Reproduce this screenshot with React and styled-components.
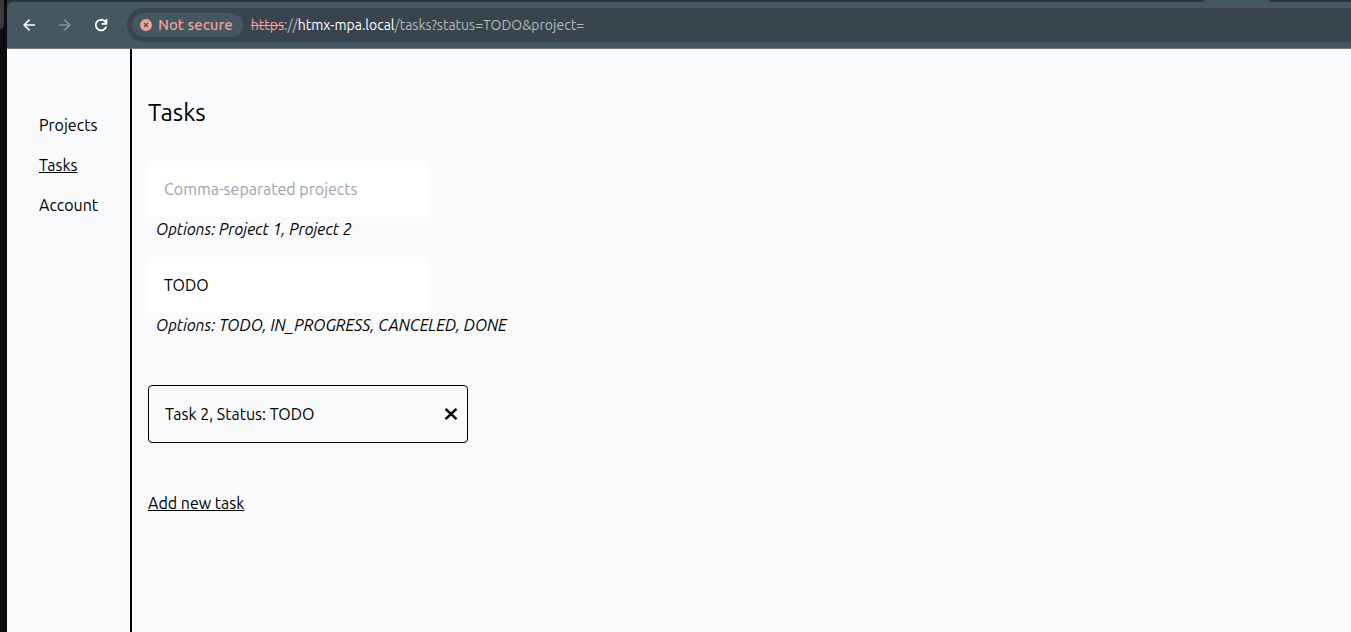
import React, { useState } from "react";
import styled, { createGlobalStyle } from "styled-components";

const GlobalStyle = createGlobalStyle`
  *, *::before, *::after { box-sizing: border-box; }
  body {
    margin: 0;
    background: #f9fafc;
    color: #000;
    font-family: Ubuntu, "Noto Sans", sans-serif;
    font-size: 16px;
    line-height: 24px;
  }
  button, input { font: inherit; color: inherit; }
`;

const Desktop = styled.div`
  display: flex;
  min-height: 100vh;
  background: #0d0d0d;
`;

const Edge = styled.div`
  flex: none;
  width: 7px;
`;

const EdgeWindow = styled.div`
  width: 4px;
  height: 29px;
  background: #3a3a3a;
  border-bottom-right-radius: 4px;
`;

const Browser = styled.div`
  flex: 1;
  min-width: 0;
  display: flex;
  flex-direction: column;
  background: #2a373d;
`;

const TabStrip = styled.div`
  display: flex;
  height: 2px;
  background: linear-gradient(90deg, #2a373d 50%, #455760 50%);
`;

const TabGap = styled.div`
  flex: ${(p) => (p.$width ? "none" : "1")};
  width: ${(p) => (p.$width ? p.$width : "auto")};
  background: #2a373d;
  border-radius: ${(p) => (p.$width ? "0 0 0 8px" : "0 0 8px 0")};
`;

const ActiveTab = styled.div`
  flex: none;
  width: 64px;
`;

const Toolbar = styled.header`
  display: flex;
  align-items: center;
  gap: 20px;
  height: 47px;
  padding: 0 0 0 14px;
  background: #455760;
  border-bottom: 1px solid #6d7b83;
  border-top-left-radius: 6px;
`;

const NavButton = styled.button`
  flex: none;
  display: flex;
  width: 16px;
  height: 16px;
  padding: 0;
  border: 0;
  background: none;
  color: ${(p) => (p.disabled ? "#84919a" : "#fff")};
`;

const AddressBar = styled.div`
  flex: 1;
  min-width: 0;
  display: flex;
  align-items: center;
  gap: 8px;
  height: 34px;
  margin-left: -2px;
  padding-left: 5px;
  border-radius: 17px 0 0 17px;
  background: #39454c;
  font-size: 14px;
`;

const SecurityChip = styled.button`
  display: flex;
  align-items: center;
  gap: 6px;
  height: 24px;
  padding: 0 10px 0 8px;
  border: 0;
  border-radius: 12px;
  background: #455760;
  color: #f2a199;
  font-size: 15px;
  font-weight: 500;
  white-space: nowrap;
`;

const Url = styled.span`
  color: #b4babe;
  white-space: nowrap;
`;

const Scheme = styled.s`
  color: #f2a199;
`;

const Host = styled.span`
  color: #fff;
`;

const Page = styled.div`
  flex: 1;
  display: flex;
  background: #f9fafc;
`;

const Sidebar = styled.nav`
  display: flex;
  flex-direction: column;
  align-items: flex-start;
  gap: 16px;
  flex: none;
  width: 125px;
  padding: 64px 0 0 32px;
  border-right: 2px solid #000;
`;

const TextLink = styled.a`
  color: inherit;
  text-decoration: ${(p) => (p.$underlined ? "underline" : "none")};
`;

const Main = styled.main`
  flex: 1;
  min-width: 0;
  display: flex;
  flex-direction: column;
  align-items: flex-start;
  padding: 48px 16px;
`;

const Title = styled.h1`
  margin: 0 0 32px;
  font-size: 24px;
  font-weight: 400;
  line-height: 32px;
`;

const Filters = styled.form`
  display: flex;
  flex-direction: column;
  gap: 16px;
  margin-bottom: 48px;
`;

const Field = styled.div`
  display: flex;
  flex-direction: column;
`;

const TextInput = styled.input`
  width: 280px;
  height: 56px;
  padding: 16px;
  border: 0;
  background: #fff;
  &::placeholder { color: #9ca3af; opacity: 1; }
`;

const Hint = styled.label`
  padding-left: 8px;
  font-style: italic;
`;

const TaskList = styled.ul`
  display: flex;
  flex-direction: column;
  gap: 16px;
  margin: 0 0 48px;
  padding: 0;
  list-style: none;
`;

const TaskCard = styled.li`
  display: flex;
  align-items: center;
  justify-content: space-between;
  width: 320px;
  height: 58px;
  padding: 0 8px 0 16px;
  border: 1px solid #000;
  border-radius: 4px;
`;

const RemoveButton = styled.button`
  display: flex;
  padding: 0;
  border: 0;
  background: none;
`;

function BackIcon() {
  return (
    <svg width="16" height="16" viewBox="0 0 16 16" fill="none" stroke="currentColor" strokeWidth="1.7">
      <path d="M14 8H3.5M8.6 2.6L3.2 8l5.4 5.4" />
    </svg>
  );
}

function ForwardIcon() {
  return (
    <svg width="16" height="16" viewBox="0 0 16 16" fill="none" stroke="currentColor" strokeWidth="1.7">
      <path d="M2 8h10.5M7.4 2.6L12.8 8l-5.4 5.4" />
    </svg>
  );
}

function ReloadIcon() {
  return (
    <svg width="16" height="16" viewBox="0 0 16 16" fill="none" stroke="currentColor" strokeWidth="1.8">
      <path d="M13.2 9.4A5.3 5.3 0 1 1 11.8 4.3L13.4 6" />
      <path d="M13.4 2v4.9H8.6" />
    </svg>
  );
}

function NotSecureIcon() {
  return (
    <svg width="12" height="12" viewBox="0 0 12 12">
      <circle cx="6" cy="6" r="6" fill="#f2a199" />
      <path d="M4 4l4 4M8 4L4 8" stroke="#455760" strokeWidth="1.4" />
    </svg>
  );
}

function CrossIcon() {
  return (
    <svg width="16" height="16" viewBox="0 0 16 16" fill="none" stroke="#000" strokeWidth="2.4">
      <path d="M2.5 2.8l11 10.4M13.5 2.8l-11 10.4" />
    </svg>
  );
}

function FilterField({ id, hint, initial = "", placeholder }) {
  const [value, setValue] = useState(initial);
  return (
    <Field>
      <TextInput
        id={id}
        name={id}
        value={value}
        placeholder={placeholder}
        onChange={(e) => setValue(e.target.value)}
      />
      <Hint htmlFor={id}>{hint}</Hint>
    </Field>
  );
}

export default function App() {
  return (
    <Desktop>
      <GlobalStyle />
      <Edge>
        <EdgeWindow />
      </Edge>
      <Browser>
        <TabStrip>
          <TabGap />
          <ActiveTab />
          <TabGap $width="82px" />
        </TabStrip>
        <Toolbar>
          <NavButton aria-label="Back"><BackIcon /></NavButton>
          <NavButton aria-label="Forward" disabled><ForwardIcon /></NavButton>
          <NavButton aria-label="Reload"><ReloadIcon /></NavButton>
          <AddressBar>
            <SecurityChip><NotSecureIcon />Not secure</SecurityChip>
            <Url>
              <Scheme>https</Scheme>://<Host>htmx-mpa.local</Host>/tasks?status=TODO&amp;project=
            </Url>
          </AddressBar>
        </Toolbar>
        <Page>
          <Sidebar>
            <TextLink href="#projects">Projects</TextLink>
            <TextLink href="#tasks" $underlined>Tasks</TextLink>
            <TextLink href="#account">Account</TextLink>
          </Sidebar>
          <Main>
            <Title>Tasks</Title>
            <Filters>
              <FilterField id="project" placeholder="Comma-separated projects" hint="Options: Project 1, Project 2" />
              <FilterField id="status" initial="TODO" hint="Options: TODO, IN_PROGRESS, CANCELED, DONE" />
            </Filters>
            <TaskList>
              <TaskCard>
                Task 2, Status: TODO
                <RemoveButton aria-label="Remove task"><CrossIcon /></RemoveButton>
              </TaskCard>
            </TaskList>
            <TextLink href="#new" $underlined>Add new task</TextLink>
          </Main>
        </Page>
      </Browser>
    </Desktop>
  );
}
